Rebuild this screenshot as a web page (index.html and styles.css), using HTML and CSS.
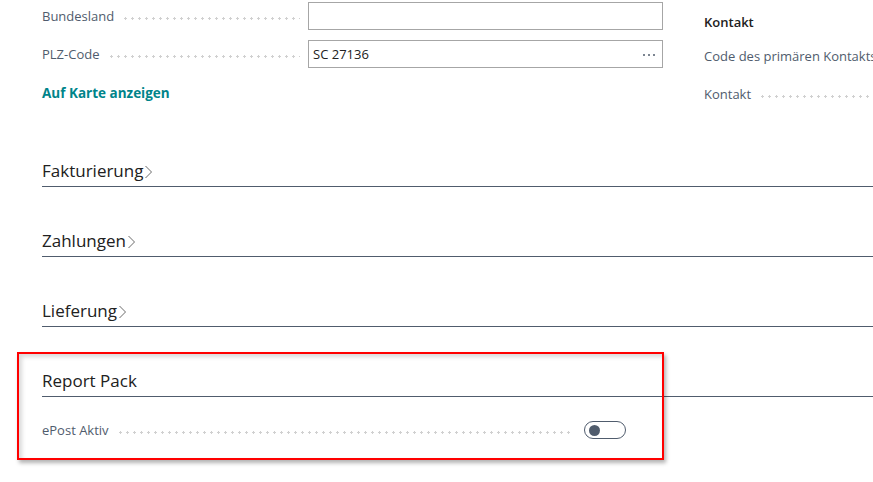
FILE: index.html
```html
<!DOCTYPE html>
<html lang="de">
<head>
<meta charset="utf-8">
<title>Debitor</title>
<link rel="stylesheet" href="styles.css">
</head>
<body>
<div class="page">
  <div class="top">
    <div class="col-left">
      <div class="field">
        <span class="label">Bundesland</span>
        <span class="leader"></span>
        <div class="input"></div>
      </div>
      <div class="field">
        <span class="label">PLZ-Code</span>
        <span class="leader"></span>
        <div class="input"><span class="value">SC 27136</span><span class="more"><i></i><i></i><i></i></span></div>
      </div>
      <a class="link" href="#">Auf Karte anzeigen</a>
    </div>
    <div class="col-right">
      <div class="group-title">Kontakt</div>
      <div class="rfield">Code des primären Kontakts</div>
      <div class="rfield"><span class="label">Kontakt</span><span class="leader"></span></div>
    </div>
  </div>

  <section class="fasttab"><h2 class="ft-head">Fakturierung<svg class="chev" width="9" height="14" viewBox="0 0 9 14"><path d="M1.5 1 L7.5 7 L1.5 13" fill="none" stroke="#6b6b6b" stroke-width="1"/></svg></h2></section>
  <section class="fasttab"><h2 class="ft-head">Zahlungen<svg class="chev" width="9" height="14" viewBox="0 0 9 14"><path d="M1.5 1 L7.5 7 L1.5 13" fill="none" stroke="#6b6b6b" stroke-width="1"/></svg></h2></section>
  <section class="fasttab"><h2 class="ft-head">Lieferung<svg class="chev" width="9" height="14" viewBox="0 0 9 14"><path d="M1.5 1 L7.5 7 L1.5 13" fill="none" stroke="#6b6b6b" stroke-width="1"/></svg></h2></section>
  <section class="fasttab open">
    <h2 class="ft-head">Report Pack</h2>
    <div class="toggle-field">
      <span class="label">ePost Aktiv</span>
      <span class="leader"></span>
      <span class="toggle"><span class="knob"></span></span>
    </div>
    <div class="highlight"></div>
  </section>
</div>
</body>
</html>
```

FILE: styles.css
```css
html, body {
  margin: 0;
  padding: 0;
  background: #fff;
  overflow: hidden;
}
body {
  font-family: "Open Sans", "Noto Sans", sans-serif;
  color: #212121;
  width: 873px;
  height: 482px;
}
.page {
  width: 1000px;
  padding-left: 42px;
  padding-top: 2px;
}
.top {
  display: flex;
  gap: 41px;
}
.col-left {
  width: 621px;
  display: flex;
  flex-direction: column;
  gap: 10px;
}
.field {
  display: flex;
  align-items: center;
  height: 28px;
}
.label {
  font-size: 13px;
  color: #505c6d;
  white-space: nowrap;
}
.leader {
  flex: 1;
  height: 3px;
  margin: 4px 8px 0 8px;
  background-image: radial-gradient(circle, #d0d0d0 1px, transparent 1.3px);
  background-size: 7px 3px;
  background-repeat: repeat-x;
}
.input {
  height: 26px;
  border: 1px solid #a6a6a6;
  display: flex;
  align-items: center;
  justify-content: space-between;
  padding: 0 7px 0 4px;
  box-sizing: content-box;
  width: 342px;
}
.value {
  font-size: 13px;
  color: #212121;
}
.more {
  display: flex;
  gap: 3px;
  margin-top: 2px;
}
.more i {
  width: 2px;
  height: 2px;
  border-radius: 50%;
  background: #505c6d;
}
.link {
  font-size: 13.5px;
  font-weight: 700;
  color: #00848a;
  text-decoration: none;
  margin-top: 6px;
}
.col-right {
  width: 300px;
  display: flex;
  flex-direction: column;
}
.group-title {
  font-size: 13px;
  font-weight: 600;
  color: #212121;
  margin-top: 11px;
  height: 18px;
}
.rfield {
  font-size: 13px;
  color: #505c6d;
  white-space: nowrap;
  margin-top: 16px;
  height: 18px;
  display: flex;
  align-items: center;
}
.rfield + .rfield { margin-top: 20px; }
.fasttab {
  position: relative;
  margin-top: 56px;
}
.fasttab + .fasttab { margin-top: 42px; }
.ft-head {
  margin: 0;
  font-size: 17px;
  font-weight: 400;
  color: #212121;
  line-height: 24px;
  padding-bottom: 3px;
  border-bottom: 1px solid #505c6d;
  display: flex;
  align-items: center;
}
.chev {
  margin-left: 1px;
  margin-top: 2px;
}
.toggle-field {
  display: flex;
  align-items: center;
  width: 584px;
  height: 18px;
  margin-top: 24px;
}
.toggle-field .leader { margin-right: 12px; }
.toggle {
  height: 16px;
  border: 1px solid #505c6d;
  border-radius: 9px;
  display: flex;
  align-items: center;
  padding-left: 4px;
  box-sizing: content-box;
  width: 36px;
}
.knob {
  width: 11px;
  height: 11px;
  border-radius: 50%;
  background: #505c6d;
}
.highlight {
  position: absolute;
  left: -25px;
  top: -17px;
  width: 643px;
  height: 104px;
  border: 2px solid #ff0000;
  box-shadow: 2px 3px 4px rgba(0,0,0,0.3), inset 3px 3px 4px rgba(0,0,0,0.15);
  pointer-events: none;
}
```
